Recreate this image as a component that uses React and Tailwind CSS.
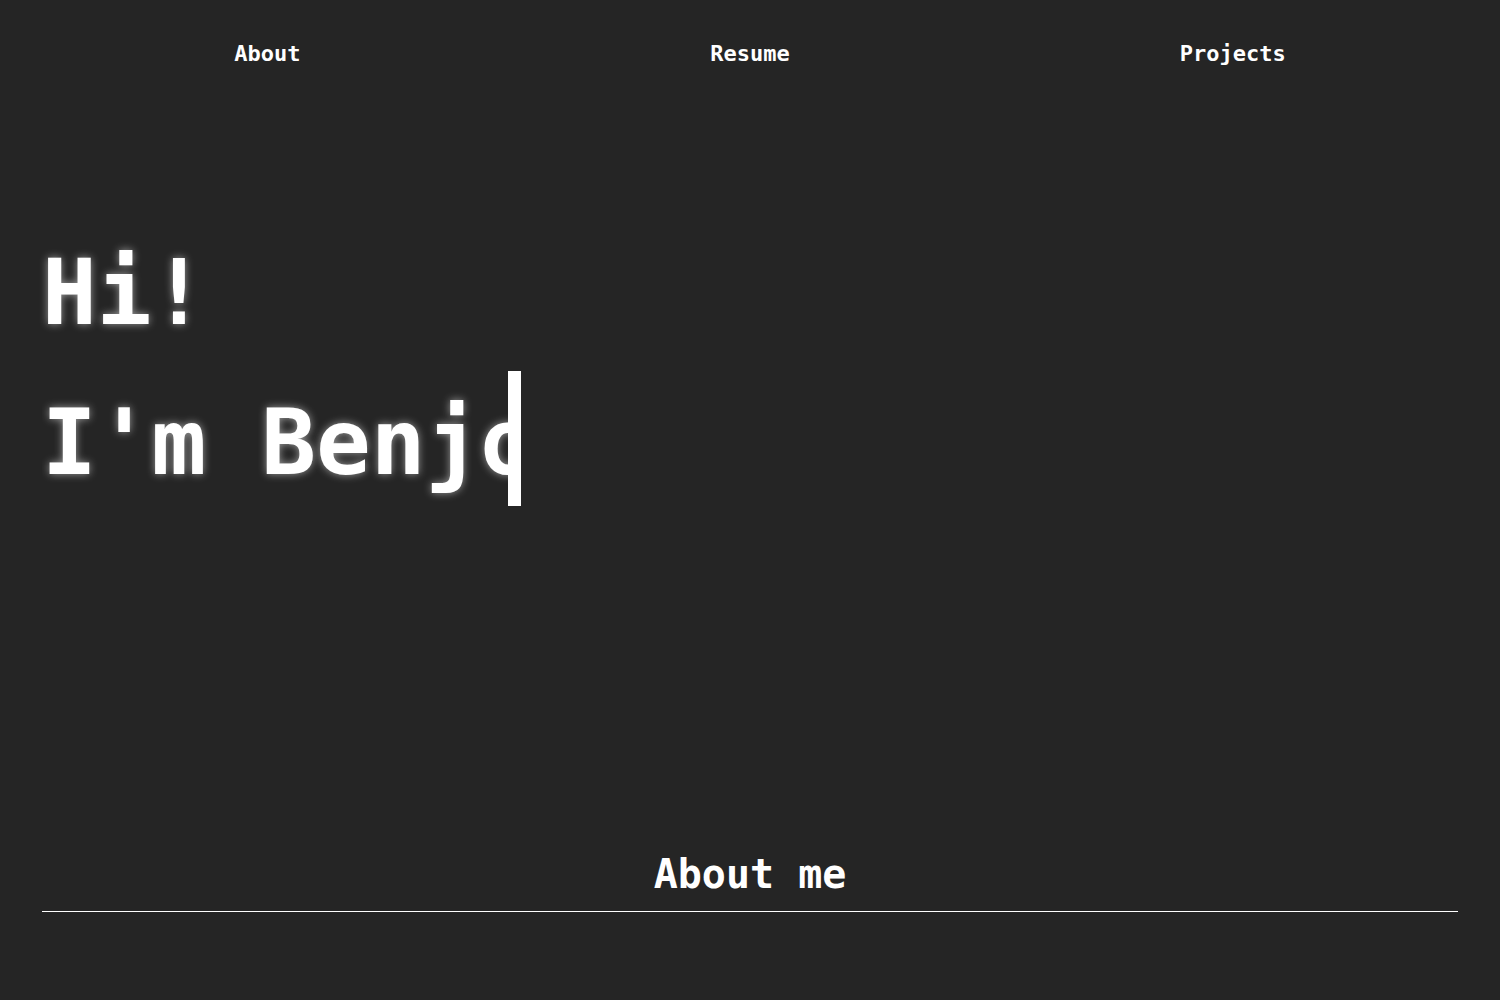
import React from 'react';

const mono = { fontFamily: '"DejaVu Sans Mono", "Liberation Mono", monospace' };

function Nav() {
  const links = ['About', 'Resume', 'Projects'];
  return (
    <nav className="grid grid-cols-3 h-[106px] items-center px-[26px]">
      {links.map((l) => (
        <a key={l} href="#" className="text-center text-[22px] font-bold text-white">
          {l}
        </a>
      ))}
    </nav>
  );
}

function Hero() {
  return (
    <section className="px-[42px] pt-[112px] text-[91px] font-bold text-white leading-[150px] [text-shadow:0_0_8px_rgba(255,255,255,0.55)]">
      <div>Hi!</div>
      <div className="flex items-start">
        <span className="block w-[466px] overflow-hidden whitespace-nowrap">I'm Benjo</span>
        <span className="block w-[13px] h-[135px] mt-[3px] bg-white"></span>
      </div>
    </section>
  );
}

export default function App() {
  return (
    <div className="min-h-screen bg-[#252525] text-white" style={mono}>
      <Nav />
      <Hero />
      <section className="mt-[336px] mx-[42px]">
        <h2 className="text-center text-[40px] font-bold leading-[40px] pb-[17px] border-b border-white">
          About me
        </h2>
      </section>
    </div>
  );
}
